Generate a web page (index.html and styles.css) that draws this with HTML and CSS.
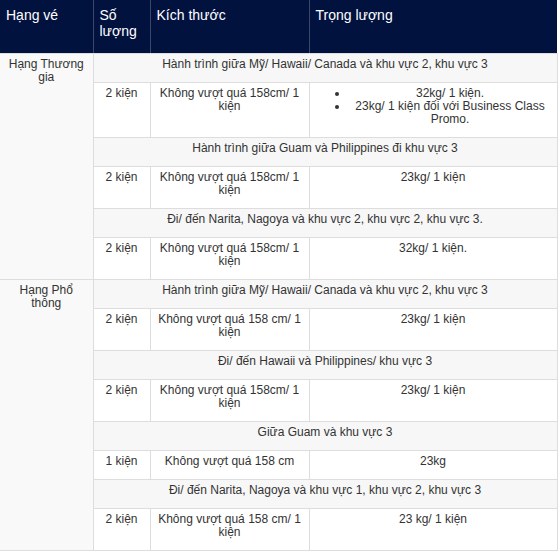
FILE: index.html
```html
<!DOCTYPE html>
<html lang="vi">
<head>
<meta charset="utf-8">
<link rel="stylesheet" href="styles.css">
</head>
<body>
<table class="bag">
  <colgroup>
    <col class="c0"><col class="c1"><col class="c2"><col class="c3">
  </colgroup>
  <thead>
    <tr>
      <th>Hạng vé</th>
      <th>Số lượng</th>
      <th>Kích thước</th>
      <th>Trọng lượng</th>
    </tr>
  </thead>
  <tbody>
    <tr>
      <td class="cls" rowspan="6">Hạng Thương gia</td>
      <td class="seg" colspan="3">Hành trình giữa Mỹ/ Hawaii/ Canada và khu vực 2, khu vực 3</td>
    </tr>
    <tr>
      <td>2 kiện</td>
      <td>Không vượt quá 158cm/ 1 kiện</td>
      <td>
        <ul class="list">
          <li>32kg/ 1 kiện.</li>
          <li>23kg/ 1 kiện đối với Business Class Promo.</li>
        </ul>
      </td>
    </tr>
    <tr>
      <td class="seg" colspan="3">Hành trình giữa Guam và Philippines đi khu vực 3</td>
    </tr>
    <tr>
      <td>2 kiện</td>
      <td>Không vượt quá 158cm/ 1 kiện</td>
      <td>23kg/ 1 kiện</td>
    </tr>
    <tr>
      <td class="seg" colspan="3">Đi/ đến Narita, Nagoya và khu vực 2, khu vực 2, khu vực 3.</td>
    </tr>
    <tr>
      <td>2 kiện</td>
      <td>Không vượt quá 158cm/ 1 kiện</td>
      <td>32kg/ 1 kiện.</td>
    </tr>
    <tr>
      <td class="cls" rowspan="8">Hạng Phổ thông</td>
      <td class="seg" colspan="3">Hành trình giữa Mỹ/ Hawaii/ Canada và khu vực 2, khu vực 3</td>
    </tr>
    <tr>
      <td>2 kiện</td>
      <td>Không vượt quá 158 cm/ 1 kiện</td>
      <td>23kg/ 1 kiện</td>
    </tr>
    <tr>
      <td class="seg" colspan="3">Đi/ đến Hawaii và Philippines/ khu vực 3</td>
    </tr>
    <tr>
      <td>2 kiện</td>
      <td>Không vượt quá 158cm/ 1 kiện</td>
      <td>23kg/ 1 kiện</td>
    </tr>
    <tr>
      <td class="seg" colspan="3">Giữa Guam và khu vực 3</td>
    </tr>
    <tr>
      <td>1 kiện</td>
      <td>Không vượt quá 158 cm</td>
      <td>23kg</td>
    </tr>
    <tr>
      <td class="seg" colspan="3">Đi/ đến Narita, Nagoya và khu vực 1, khu vực 2, khu vực 3</td>
    </tr>
    <tr>
      <td>2 kiện</td>
      <td>Không vượt quá 158 cm/ 1 kiện</td>
      <td>23 kg/ 1 kiện</td>
    </tr>
  </tbody>
</table>
</body>
</html>
```

FILE: styles.css
```css
html, body {
  margin: 0;
  padding: 0;
  background: #ffffff;
}

body {
  font-family: "Liberation Sans", Arial, sans-serif;
}

.bag {
  width: 557px;
  border-collapse: collapse;
  table-layout: fixed;
}

.c0 { width: 93px; }
.c1 { width: 57px; }
.c2 { width: 159px; }
.c3 { width: 248px; }

.bag th {
  background: #02123f;
  color: #ffffff;
  font-size: 14px;
  font-weight: normal;
  line-height: 16px;
  text-align: left;
  vertical-align: top;
  padding: 7px 6px 14px 6px;
  height: 32px;
  border-left: 1px solid #3c4768;
  border-bottom: 1px solid #dddddd;
}

.bag th:first-child {
  border-left: none;
}

.bag td {
  font-size: 12px;
  line-height: 13px;
  color: #333333;
  text-align: center;
  vertical-align: top;
  padding: 4px 5px 11px 5px;
  border: 1px solid #dddddd;
}

.bag td.cls {
  background: #f9f9f9;
  border-left: none;
}

.bag td.seg {
  background: #f7f7f7;
}

.list {
  margin: 0;
  padding: 0 0 0 34px;
  list-style: disc outside;
}

.list li {
  text-align: center;
}
```
